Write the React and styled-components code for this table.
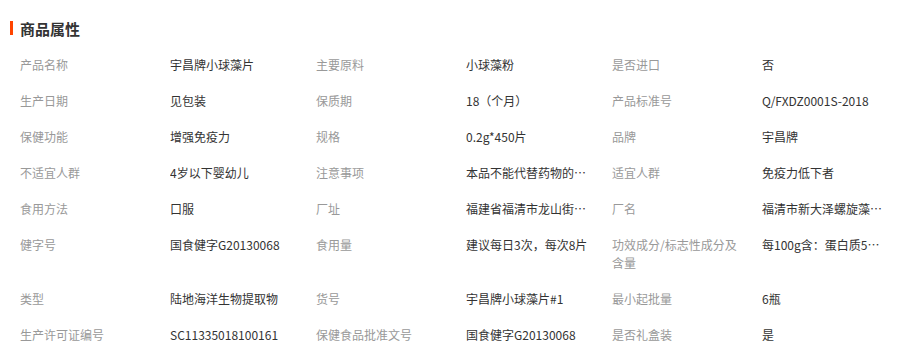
import React from "react";
import styled, { createGlobalStyle } from "styled-components";

const GlobalStyle = createGlobalStyle`
  body {
    margin: 0;
    background: #fff;
    font-family: "Noto Sans CJK SC", "Noto Sans", sans-serif;
  }
`;

const Style = styled.div`
  width: 908px;
  height: 364px;
  overflow: hidden;
  background: #fff;
`;

const Title = styled.div`
  margin: 18px 0 0 10px;
  height: 20px;
  display: flex;
  align-items: center;
  gap: 7px;
  font-size: 15px;
  font-weight: 700;
  color: #333;

  &::before {
    content: "";
    width: 3px;
    height: 14px;
    background: #ff4400;
  }
`;

const Grid = styled.div`
  margin-top: 9px;
  padding-left: 20px;
  display: grid;
  grid-template-columns: repeat(3, 150px 146px);
  font-size: 12px;
  line-height: 18px;
`;

const Label = styled.div`
  padding: 9px 20px 9px 0;
  color: #999;
`;

const Value = styled.div`
  padding: 9px 22px 9px 0;
  color: #333;
  white-space: nowrap;
  overflow: hidden;
  text-overflow: ellipsis;
`;

const props = [
  ["产品名称", "宇昌牌小球藻片"],
  ["主要原料", "小球藻粉"],
  ["是否进口", "否"],
  ["生产日期", "见包装"],
  ["保质期", "18（个月）"],
  ["产品标准号", "Q/FXDZ0001S-2018"],
  ["保健功能", "增强免疫力"],
  ["规格", "0.2g*450片"],
  ["品牌", "宇昌牌"],
  ["不适宜人群", "4岁以下婴幼儿"],
  ["注意事项", "本品不能代替药物的使用"],
  ["适宜人群", "免疫力低下者"],
  ["食用方法", "口服"],
  ["厂址", "福建省福清市龙山街道新大泽路"],
  ["厂名", "福清市新大泽螺旋藻有限公司"],
  ["健字号", "国食健字G20130068"],
  ["食用量", "建议每日3次，每次8片"],
  ["功效成分/标志性成分及含量", "每100g含：蛋白质50g、粗多糖2.5g"],
  ["类型", "陆地海洋生物提取物"],
  ["货号", "宇昌牌小球藻片#1"],
  ["最小起批量", "6瓶"],
  ["生产许可证编号", "SC11335018100161"],
  ["保健食品批准文号", "国食健字G20130068"],
  ["是否礼盒装", "是"],
];

class App extends React.Component {
  render() {
    return (
      <Style>
        <GlobalStyle />
        <Title>商品属性</Title>
        <Grid>
          {props.map(([label, value]) => (
            <React.Fragment key={label}>
              <Label>{label}</Label>
              <Value>{value}</Value>
            </React.Fragment>
          ))}
        </Grid>
      </Style>
    );
  }
}

export default App;
